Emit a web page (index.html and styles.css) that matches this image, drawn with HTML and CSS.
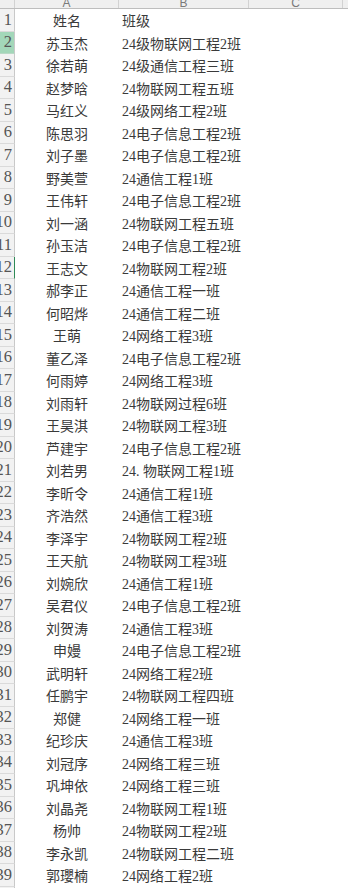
FILE: index.html
```html
<!DOCTYPE html>
<html lang="zh-CN">
<head>
<meta charset="utf-8">
<title>Sheet</title>
<link rel="stylesheet" href="styles.css">
</head>
<body>
<div class="sheet">
  <div class="colhead">
    <div class="ch corner"></div>
    <div class="ch"><span>A</span></div>
    <div class="ch"><span>B</span></div>
    <div class="ch"><span>C</span></div>
    <div class="ch rest"></div>
  </div>
  <div class="rows" id="rows"></div>
</div>
<script src="app.js"></script>
</body>
</html>
```
FILE: app.js
```js
const data = [
["姓名","班级"],
["苏玉杰","24级物联网工程2班"],
["徐若萌","24级通信工程三班"],
["赵梦晗","24物联网工程五班"],
["马红义","24级网络工程2班"],
["陈思羽","24电子信息工程2班"],
["刘子墨","24电子信息工程2班"],
["野美萱","24通信工程1班"],
["王伟轩","24电子信息工程2班"],
["刘一涵","24物联网工程五班"],
["孙玉洁","24电子信息工程2班"],
["王志文","24物联网工程2班"],
["郝李正","24通信工程一班"],
["何昭烨","24通信工程二班"],
["王萌","24网络工程3班"],
["董乙泽","24电子信息工程2班"],
["何雨婷","24网络工程3班"],
["刘雨轩","24物联网过程6班"],
["王昊淇","24物联网工程3班"],
["芦建宇","24电子信息工程2班"],
["刘若男","24. 物联网工程1班"],
["李昕令","24通信工程1班"],
["齐浩然","24通信工程3班"],
["李泽宇","24物联网工程2班"],
["王天航","24物联网工程3班"],
["刘婉欣","24通信工程1班"],
["吴君仪","24电子信息工程2班"],
["刘贺涛","24通信工程3班"],
["申嫚","24电子信息工程2班"],
["武明轩","24网络工程2班"],
["任鹏宇","24物联网工程四班"],
["郑健","24网络工程一班"],
["纪珍庆","24通信工程3班"],
["刘冠序","24网络工程三班"],
["巩坤依","24网络工程三班"],
["刘晶尧","24物联网工程1班"],
["杨帅","24物联网工程2班"],
["李永凯","24物联网工程二班"],
["郭瓔楠","24网络工程2班"],
["",""]
];
const rows = document.getElementById("rows");
data.forEach((d, i) => {
  const n = i + 1;
  const row = document.createElement("div");
  row.className = "row";
  let cls = "rh";
  if (n === 2) cls += " sel";
  if (n === 12) cls += " mark";
  row.innerHTML =
    '<div class="' + cls + '"><span>' + n + '</span></div>' +
    '<div class="c a">' + d[0] + '</div>' +
    '<div class="c b">' + d[1] + '</div>' +
    '<div class="c"></div>';
  rows.appendChild(row);
});
```
FILE: styles.css
```css
html, body {
  margin: 0;
  padding: 0;
  background: #ffffff;
  overflow: hidden;
}
.sheet {
  width: 348px;
  height: 888px;
  overflow: hidden;
  font-family: "Liberation Serif", "Noto Sans CJK SC", serif;
  color: #3a3a3a;
}
.colhead {
  display: grid;
  grid-template-columns: 15px 104px 130px 94px 1fr;
  height: 9px;
  box-sizing: border-box;
  border-bottom: 1px solid #bdbdbd;
  background: #efefef;
}
.ch {
  box-sizing: border-box;
  border-right: 1px solid #d2d2d2;
  overflow: hidden;
  display: flex;
  justify-content: center;
  align-items: flex-end;
}
.ch span {
  font-family: "Liberation Sans", "Noto Sans", sans-serif;
  font-size: 12px;
  line-height: 12px;
  color: #7a7a7a;
  margin-bottom: -1px;
}
.ch.rest {
  border-right: none;
}
.row {
  display: grid;
  grid-template-columns: 15px 104px 130px 1fr;
  height: 22.5px;
}
.rh {
  box-sizing: border-box;
  background: #f2f2f2;
  border-right: 1px solid #c9c9c9;
  border-bottom: 1px solid #dadada;
  display: flex;
  justify-content: flex-end;
  align-items: center;
  overflow: hidden;
  white-space: nowrap;
  padding-right: 2px;
  font-size: 16.5px;
  color: #555555;
}
.rh.sel {
  background: #a3d7b9;
  border-bottom-color: #b9d9c6;
}
.rh.mark {
  border-right: 1px solid #2f8a57;
}
.c {
  display: flex;
  align-items: center;
  white-space: nowrap;
  overflow: visible;
  font-size: 14px;
}
.c.a {
  justify-content: center;
}
.c.b {
  padding-left: 3px;
}
```
